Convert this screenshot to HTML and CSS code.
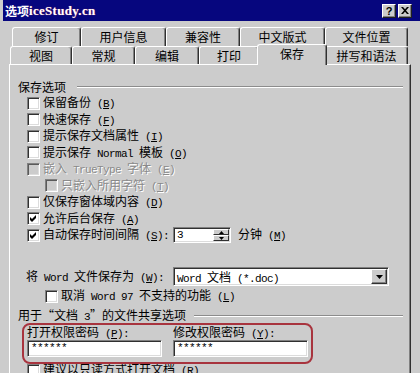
FILE: index.html
```html
<!DOCTYPE html>
<html>
<head>
<meta charset="utf-8">
<link rel="stylesheet" href="styles.css">
</head>
<body>
<div class="win">
  <div class="titlebar">
    <div class="title">选项<span class="wm">iceStudy.cn</span></div>
    <div class="tbtns">
      <span class="tbtn help">?</span>
      <span class="tbtn"><svg width="8" height="7" viewBox="0 0 8 7"><path d="M0 0h2l2 2.2L6 0h2L5 3.5 8 7H6L4 4.8 2 7H0l3-3.5z" fill="#000"/></svg></span>
    </div>
  </div>

  <div class="tabs">
    <div class="tabrow back">
      <div class="tab t69">修订</div>
      <div class="tab t85">用户信息</div>
      <div class="tab t74">兼容性</div>
      <div class="tab t85">中文版式</div>
      <div class="tab t83">文件位置</div>
    </div>
    <div class="tabrow front">
      <div class="tab t62">视图</div>
      <div class="tab t63">常规</div>
      <div class="tab t64">编辑</div>
      <div class="tab t60">打印</div>
      <div class="tab t66 sel">保存</div>
      <div class="tab t83">拼写和语法</div>
    </div>
  </div>

  <div class="panel">
    <div class="gt"><span>保存选项</span><span class="gline"></span></div>
    <div class="opts">
      <div class="row"><span class="cb"></span><span class="lbl">保留备份<span class="m"> (<u>B</u>)</span></span></div>
      <div class="row"><span class="cb"></span><span class="lbl">快速保存<span class="m"> (<u>F</u>)</span></span></div>
      <div class="row"><span class="cb"></span><span class="lbl">提示保存文档属性<span class="m"> (<u>I</u>)</span></span></div>
      <div class="row"><span class="cb"></span><span class="lbl">提示保存<span class="m"> Normal </span>模板<span class="m"> (<u>O</u>)</span></span></div>
      <div class="row dis"><span class="cb"></span><span class="lbl">嵌入<span class="m"> TrueType </span>字体<span class="m"> (<u>E</u>)</span></span></div>
      <div class="row dis sub"><span class="cb"></span><span class="lbl">只嵌入所用字符<span class="m"> (<u>T</u>)</span></span></div>
      <div class="row"><span class="cb"></span><span class="lbl">仅保存窗体域内容<span class="m"> (<u>D</u>)</span></span></div>
      <div class="row"><span class="cb"><svg width="7" height="7" viewBox="0 0 7 7"><polygon points="0,2 2,4 6,0 6,3 2,7 0,5" fill="#000"/></svg></span><span class="lbl">允许后台保存<span class="m"> (<u>A</u>)</span></span></div>
      <div class="row"><span class="cb"><svg width="7" height="7" viewBox="0 0 7 7"><polygon points="0,2 2,4 6,0 6,3 2,7 0,5" fill="#000"/></svg></span><span class="lbl wide">自动保存时间间隔<span class="m"> (<u>S</u>):</span></span>
        <span class="spin"><span class="sval m">3</span><span class="sbtns"><span class="sb"><svg width="5" height="3" viewBox="0 0 5 3"><polygon points="2.5,0 5,3 0,3" fill="#000"/></svg></span><span class="sb"><svg width="5" height="3" viewBox="0 0 5 3"><polygon points="0,0 5,0 2.5,3" fill="#000"/></svg></span></span></span>
        <span class="after">分钟<span class="m"> (<u>M</u>)</span></span>
      </div>
    </div>

    <div class="saveas">
      <span class="salbl">将<span class="m"> Word </span>文件保存为<span class="m"> (<u>W</u>):</span></span>
      <span class="select"><span class="selval"><span class="m">Word </span>文档<span class="m"> (*.doc)</span></span><span class="dd"><svg width="7" height="4" viewBox="0 0 7 4"><polygon points="0,0 7,0 3.5,4" fill="#000"/></svg></span></span>
    </div>
    <div class="row cancel"><span class="cb"></span><span class="lbl">取消<span class="m"> Word 97 </span>不支持的功能<span class="m"> (<u>L</u>)</span></span></div>

    <div class="gt gt2"><span>用于“文档<span class="m"> 3</span>”的文件共享选项</span><span class="gline"></span></div>
    <div class="pw">
      <span class="pwl">打开权限密码<span class="m"> (<u>P</u>):</span></span>
      <span class="pwl">修改权限密码<span class="m"> (<u>Y</u>):</span></span>
      <span class="field m">******</span>
      <span class="field m">******</span>
    </div>
    <div class="row last"><span class="cb"></span><span class="lbl">建议以只读方式打开文档<span class="m"> (<u>R</u>)</span></span></div>
  </div>

  <div class="mark"></div>
</div>
</body>
</html>
```

FILE: styles.css
```css
* { box-sizing: border-box; }
html, body { margin: 0; padding: 0; }
body {
  background: #cccccc;
  font-family: "Noto Sans CJK SC", "Noto Sans", sans-serif;
  font-size: 12px;
  color: #000;
}
.win {
  position: relative;
  width: 420px;
  height: 373px;
  overflow: hidden;
  background: #cccccc;
}
.m {
  font-family: "Liberation Mono", monospace;
  font-size: 11px;
  letter-spacing: -0.6px;
}
u { text-decoration: underline; }

/* title bar */
.titlebar {
  height: 21px;
  margin-left: 3px;
  background: #06067e;
  display: flex;
  align-items: center;
  justify-content: space-between;
  padding: 0 8px 0 2px;
}
.title {
  color: #fff;
  font-weight: bold;
  font-size: 12px;
  line-height: 14px;
  display: flex;
  align-items: center;
}
.wm {
  font-family: "Liberation Serif", serif;
  font-size: 13px;
  font-weight: bold;
  letter-spacing: 0.3px;
  text-shadow: 0 0 1px #c04060;
}
.tbtns { display: flex; gap: 2px; }
.tbtn {
  width: 14px;
  height: 14px;
  background: #cccccc;
  border-top: 1px solid #fff;
  border-left: 1px solid #fff;
  border-right: 1px solid #202020;
  border-bottom: 1px solid #202020;
  box-shadow: inset -1px -1px 0 #808080;
  display: flex;
  align-items: center;
  justify-content: center;
  font-family: "Liberation Sans", sans-serif;
  font-weight: bold;
  font-size: 11px;
  line-height: 12px;
}

/* tabs */
.tabs { margin-top: 6px; }
.tabrow { display: flex; }
.tabrow.back { margin-left: 12px; height: 19px; }
.tabrow.front { margin-left: 10px; height: 18px; }
.tab {
  height: 100%;
  border-top: 1px solid #fff;
  border-left: 1px solid #fff;
  border-right: 1px solid #303030;
  box-shadow: inset -1px 0 0 #808080;
  border-radius: 3px 3px 0 0;
  display: flex;
  align-items: center;
  justify-content: center;
  line-height: 14px;
  background: #cccccc;
}
.t60 { width: 60px; }
.t62 { width: 62px; }
.t63 { width: 63px; }
.t64 { width: 64px; }
.t66 { width: 66px; }
.t69 { width: 69px; }
.t74 { width: 74px; }
.t83 { width: 83px; }
.t85 { width: 85px; }
.tab.sel {
  position: relative;
  z-index: 1;
  width: 70px;
  height: 21px;
  margin: -2px -2px -1px -2px;
  padding-bottom: 2px;
}

/* panel */
.panel {
  margin-left: 9px;
  width: 402px;
  height: 309px;
  border-top: 1px solid #fff;
  border-left: 1px solid #fff;
  border-right: 1px solid #303030;
  box-shadow: inset -1px 0 0 #808080;
  padding: 0 7px 0 8px;
}
.gt {
  margin-top: 15px;
  height: 14px;
  line-height: 14px;
  display: flex;
  align-items: center;
  white-space: nowrap;
}
.gline {
  flex: 1;
  height: 2px;
  border-top: 1px solid #8c8c8c;
  border-bottom: 1px solid #fff;
  margin-left: 11px;
}
.gt2 { margin-top: 4.5px; }
.gt2 .gline { margin-left: 8px; }

.opts { margin-top: 1px; padding-left: 9px; }
.row {
  height: 16.5px;
  display: flex;
  align-items: center;
  white-space: nowrap;
  line-height: 14px;
}
.cb {
  width: 13px;
  height: 13px;
  flex: none;
  background: #fff;
  border-top: 1px solid #808080;
  border-left: 1px solid #808080;
  border-right: 1px solid #fff;
  border-bottom: 1px solid #fff;
  box-shadow: inset 1px 1px 0 #303030, inset -1px -1px 0 #dcdcdc;
  margin-right: 3px;
  display: flex;
  align-items: center;
  justify-content: center;
}
.row.sub { padding-left: 18px; }
.row.dis .cb { background: #cccccc; box-shadow: inset 1px 1px 0 #5a5a5a, inset -1px -1px 0 #dcdcdc; }
.row.dis .lbl { color: #8a8a8a; text-shadow: 1px 1px 0 #fff; }

.lbl.wide { width: 130px; }
.spin {
  width: 58px;
  height: 16px;
  background: #fff;
  border-top: 1px solid #808080;
  border-left: 1px solid #808080;
  border-right: 1px solid #fff;
  border-bottom: 1px solid #fff;
  box-shadow: inset 1px 1px 0 #303030, inset -1px -1px 0 #dcdcdc;
  display: flex;
  padding: 1px;
}
.sval { flex: 1; padding-left: 2px; line-height: 12px; }
.sbtns { width: 16px; display: flex; flex-direction: column; }
.sb {
  flex: 1;
  background: #cccccc;
  border-top: 1px solid #fff;
  border-left: 1px solid #fff;
  border-right: 1px solid #303030;
  border-bottom: 1px solid #303030;
  display: flex;
  align-items: center;
  justify-content: center;
}
.after { margin-left: 7px; }

.saveas {
  margin-top: 23.5px;
  height: 19px;
  padding-left: 8px;
  display: flex;
  align-items: center;
  white-space: nowrap;
  line-height: 14px;
}
.salbl { width: 147px; }
.select {
  width: 216px;
  height: 19px;
  background: #fff;
  border-top: 1px solid #808080;
  border-left: 1px solid #808080;
  border-right: 1px solid #fff;
  border-bottom: 1px solid #fff;
  box-shadow: inset 1px 1px 0 #303030, inset -1px -1px 0 #dcdcdc;
  display: flex;
  padding: 1px;
}
.selval { flex: 1; padding-left: 2px; line-height: 15px; }
.dd {
  width: 16px;
  background: #cccccc;
  border-top: 1px solid #fff;
  border-left: 1px solid #fff;
  border-right: 1px solid #303030;
  border-bottom: 1px solid #303030;
  box-shadow: inset -1px -1px 0 #808080;
  display: flex;
  align-items: center;
  justify-content: center;
}
.row.cancel { margin-top: 2px; padding-left: 27px; }

.pw {
  margin-top: 2px;
  padding-left: 9px;
  display: grid;
  grid-template-columns: 135px 135px;
  column-gap: 11px;
  row-gap: 1px;
  line-height: 14px;
}
.pwl { height: 14px; white-space: nowrap; }
.field {
  height: 17px;
  background: #fff;
  border-top: 1px solid #808080;
  border-left: 1px solid #808080;
  border-right: 1px solid #fff;
  border-bottom: 1px solid #fff;
  box-shadow: inset 1px 1px 0 #303030, inset -1px -1px 0 #dcdcdc;
  padding-left: 3px;
  line-height: 15px;
}
.row.last { margin-top: 5px; padding-left: 9px; }

.mark {
  position: absolute;
  left: 22px;
  top: 323px;
  width: 291px;
  height: 41px;
  border: 2px solid #a8343e;
  border-radius: 8px;
}
```
